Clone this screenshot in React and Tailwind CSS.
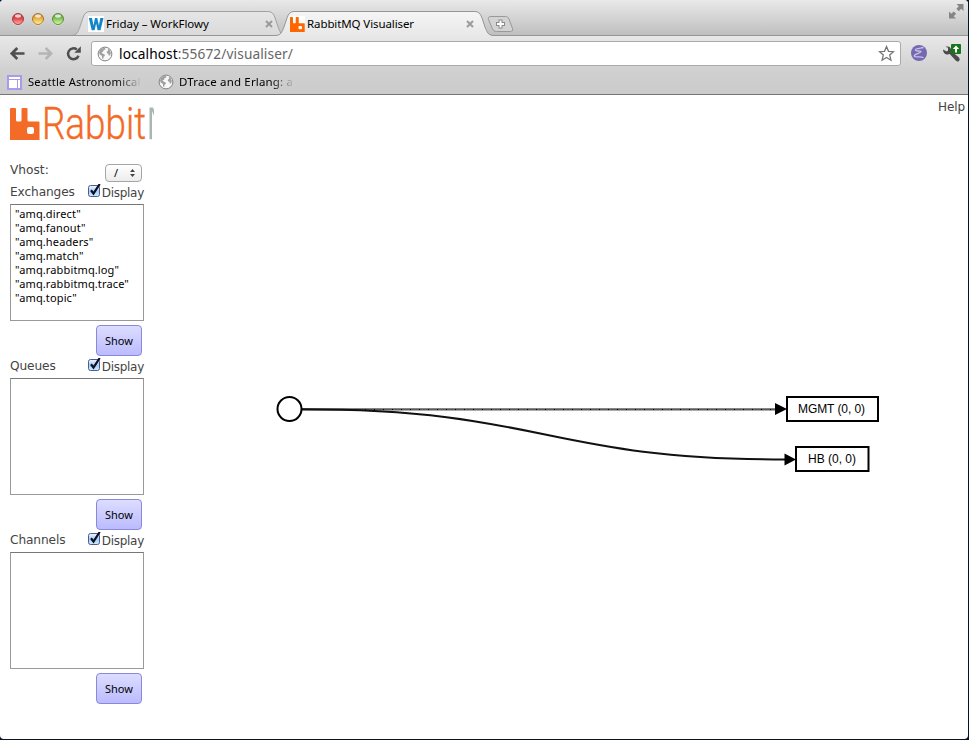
import React from "react";

const EXCHANGES = [
  '"amq.direct"',
  '"amq.fanout"',
  '"amq.headers"',
  '"amq.match"',
  '"amq.rabbitmq.log"',
  '"amq.rabbitmq.trace"',
  '"amq.topic"',
];

function TrafficLight({ id, dark, mid, light }) {
  return (
    <svg className="block h-[14px] w-[14px]" viewBox="0 0 14 14">
      <defs>
        <linearGradient id={id} x1="0" y1="0" x2="0" y2="1">
          <stop offset="0" stopColor={dark} />
          <stop offset="0.45" stopColor={mid} />
          <stop offset="1" stopColor={light} />
        </linearGradient>
      </defs>
      <circle cx="7" cy="7.6" r="6" fill="#fff" opacity="0.6" />
      <circle cx="7" cy="7" r="5.5" fill={`url(#${id})`} stroke={dark} strokeWidth="1" />
      <ellipse cx="7" cy="4" rx="3" ry="1.7" fill="#fff" opacity="0.75" />
    </svg>
  );
}

function Globe() {
  return (
    <svg className="block h-4 w-4 shrink-0" viewBox="0 0 16 16">
      <circle cx="8" cy="8" r="6.9" fill="#f8f8f8" stroke="#808080" strokeWidth="1" />
      <path d="M3 4 5 2.300 8 2l.500 1.500-2 .8-.4 1.500-1.600.8 1.300 1.200 1.700.4.4 1.500-1.400 1.300-.3 2.200-1-.7-.4-2.700L2.600 8.500 2 6.300zM10.800 2.600l2.200 2 .8 2.300-.7 2.500-1.300.2-.5-1.800-1.400-.5-.1-1.500 1.200-1z" fill="#a0a0a0" />
    </svg>
  );
}

function RabbitMark({ className, fill }) {
  return (
    <svg className={className} viewBox="0 0 30 32" preserveAspectRatio="none">
      <path
        fillRule="evenodd"
        fill={fill}
        d="M1 0H5Q6 0 6 1V12Q6 13.500 7.500 13.500H10Q11.500 13.500 11.500 12V1Q11.500 0 12.500 0H16.500Q17.500 0 17.500 1V12Q17.500 13.500 19 13.500H28.500Q29.500 13.500 29.500 14.500V32H0V1Q0 0 1 0ZM19 19Q17 19 17 21V24Q17 26 19 26H22Q24 26 24 24V21Q24 19 22 19Z"
      />
    </svg>
  );
}

function CloseMark() {
  return (
    <svg className="block h-2 w-2 shrink-0" viewBox="0 0 8 8">
      <path d="M1 1l6 6M7 1l-6 6" stroke="#9b9b9b" strokeWidth="2" />
    </svg>
  );
}

function Tab({ active, icon, title }) {
  return (
    <div
      className={
        active
          ? "relative z-10 -ml-[10px] flex h-[25px] w-[217px] items-center pl-[13px] pr-[19px] tracking-[-0.100px]"
          : "relative flex h-[25px] w-[214px] items-center pl-[16px] pr-[13px] tracking-[-0.050px]"
      }
    >
      <svg className="absolute inset-0 h-full w-full" viewBox="0 0 217 25" preserveAspectRatio="none">
        <defs>
          <linearGradient id={active ? "tabOn" : "tabOff"} x1="0" y1="0" x2="0" y2="1">
            <stop offset="0" stopColor={active ? "#f5f5f5" : "#e6e6e6"} />
            <stop offset="1" stopColor={active ? "#e8e8e8" : "#dadada"} />
          </linearGradient>
        </defs>
        <path
          d="M0 24.500C5 24 6 21 8 16L11 7Q13 .5 18 .5H199Q204 .5 206 7L209 16C211 21 212 24 217 24.500V25H0Z"
          fill={active ? "url(#tabOn)" : "url(#tabOff)"}
        />
        <path
          d="M0 24.500C5 24 6 21 8 16L11 7Q13 .5 18 .5H199Q204 .5 206 7L209 16C211 21 212 24 217 24.500"
          fill="none"
          stroke={active ? "#969696" : "#a0a0a0"}
          strokeWidth="1"
        />
        {!active && <path d="M0 24.500H217" stroke="#969696" />}
      </svg>
      <div className="relative flex w-full items-center">
        {icon}
        <span className={active ? "ml-[3px] flex-1 whitespace-nowrap text-[11.5px] leading-4 text-black" : "ml-[2px] flex-1 whitespace-nowrap text-[11.5px] leading-4 text-black"}>{title}</span>
        <CloseMark />
      </div>
    </div>
  );
}

function Checkbox() {
  return (
    <svg className="mt-[2px] block h-[15px] w-[14px]" viewBox="0 0 14 15">
      <defs>
        <linearGradient id="chk" x1="0" y1="0" x2="0" y2="1">
          <stop offset="0" stopColor="#f2f8fe" />
          <stop offset="0.5" stopColor="#a9cdf2" />
          <stop offset="1" stopColor="#c9edff" />
        </linearGradient>
      </defs>
      <rect x="0.500" y="1.500" width="11" height="11" rx="2" fill="url(#chk)" stroke="#4d5a94" />
      <path d="M3 6.300 5.500 9.500 11.700 0" fill="none" stroke="#0b1026" strokeWidth="2.200" />
    </svg>
  );
}

function Section({ title, items }) {
  return (
    <section className="flex w-[134px] flex-col">
      <div className="flex h-[22px] items-start justify-between">
        <span className="pt-px text-[12.200px] leading-[18px] tracking-[-0.120px]">{title}</span>
        <label className="flex items-start">
          <Checkbox />
          <span className="pt-[2px] text-[12px] leading-[18px] tracking-[-0.280px]">Display</span>
        </label>
      </div>
      <ul className="h-[117px] border border-[#999] border-t-[#777] px-1 pt-[2px] font-['Noto_Sans','Open_Sans',sans-serif] text-[11px] leading-[14px] tracking-[0.130px] text-black">
        {items.map((item) => (
          <li key={item} className="whitespace-nowrap">{item}</li>
        ))}
      </ul>
      <button className="mr-[2px] mt-1 h-[31px] w-[46px] self-end rounded-[4px] border border-[#8888dd] bg-linear-to-b from-[#ddddff] to-[#bbbbff] pt-[2px] font-['Noto_Sans','Open_Sans',sans-serif] text-[11px] text-black">
        Show
      </button>
    </section>
  );
}

function Browser() {
  return (
    <header className="font-['Noto_Sans','Open_Sans',sans-serif]">
      <div className="flex h-9 items-end bg-linear-to-b from-[#e9e9e9] to-[#bebebe] shadow-[inset_0_-1px_0_#969696]">
        <div className="flex w-[72px] gap-[6px] pb-[10px] pl-[11px]">
          <TrafficLight id="lr" dark="#a73a3c" mid="#e2474b" light="#ffb0a8" />
          <TrafficLight id="ly" dark="#a8762b" mid="#eeb040" light="#fff3a0" />
          <TrafficLight id="lg" dark="#5b8a3c" mid="#82c058" light="#d8ffa8" />
        </div>
        <Tab
          title="Friday – WorkFlowy"
          icon={
            <svg className="block h-4 w-4 shrink-0" viewBox="0 0 16 16">
              <rect width="16" height="16" fill="#fff" />
              <path d="M.8 2H4l1.500 7.500L7 2h2.300l1.600 7.500L12.300 2h3.200l-3 12.200H9.600L8.100 7.500l-1.500 6.700H3.700z" fill="#1386c8" />
            </svg>
          }
        />
        <Tab
          active
          title="RabbitMQ Visualiser"
          icon={
            <span className="-mr-px ml-px block h-4 w-[15px] shrink-0 bg-white pt-px">
              <RabbitMark className="block h-[15px] w-[15px]" fill="#ff6600" />
            </span>
          }
        />
        <svg className="-ml-[6px] block h-[21px] w-[27px]" viewBox="0 0 27 21">
          <path d="M4 1.500H18.500Q21 1.500 22 4L25.500 13.500Q26.500 16.500 23.500 16.500H9.500Q6.500 16.500 5.500 14L1.500 4.500Q.5 1.500 4 1.500Z" fill="#d3d3d3" stroke="#999" />
          <path d="M13.500 4.500v9M9 9h9" stroke="#8b8b8b" strokeWidth="4" />
          <path d="M13.500 5.500v7M10 9h7" stroke="#fff" strokeWidth="2" />
        </svg>
        <svg className="mb-auto ml-auto mr-1 mt-1 block h-[15px] w-[15px]" viewBox="0 0 15 15">
          <path d="M7.500 0H14.500V7L12.200 4.700 9.800 7.200 7.400 4.800 9.800 2.300ZM0 7.500 2.300 9.800 4.700 7.400 7.100 9.800 4.700 12.200 7 14.500H0Z" fill="#858585" />
        </svg>
      </div>
      <div className="flex h-[59px] flex-col border-b border-[#767676] bg-linear-to-b from-[#e8e8e8] via-[#d0d0d0] via-60% to-[#cbcbcb]">
        <div className="flex h-[35px] items-center">
          <svg className="ml-[9px] block h-4 w-[74px]" viewBox="0 0 74 16">
            <path d="M15.500 7.500H3M8.300 2 2.800 7.500l5.500 5.500" fill="none" stroke="#4f4f4f" strokeWidth="2.700" />
            <path d="M29.500 7.500H42M36.700 2 42.200 7.500l-5.500 5.500" fill="none" stroke="#b5b5b5" strokeWidth="2.500" />
            <path d="M69.500 9.700A5.400 5.400 0 1 1 67.800 3.500" fill="none" stroke="#4f4f4f" strokeWidth="2.500" />
            <path d="M71.800.3V6.700H65.300Z" fill="#4f4f4f" />
          </svg>
          <div className="ml-2 flex h-[25px] w-[810px] items-center rounded-[3px] border border-[#aaa] bg-white pl-[5px] pr-[5px]">
            <Globe />
            <span className="ml-[6px] flex-1 text-[13.700px] leading-5 tracking-[0.110px] text-[#666]">
              <span className="text-black">localhost</span>:55672/visualiser/
            </span>
            <svg className="block h-[17px] w-[17px]" viewBox="0 0 17 17">
              <path d="M8.500 1.600 10.500 6.300 15.500 6.700 11.700 10.100 12.900 15.200 8.500 12.500 4.100 15.200 5.300 10.100 1.500 6.700 6.500 6.300Z" fill="#fff" stroke="#757575" strokeWidth="1.300" />
            </svg>
          </div>
          <svg className="mb-px ml-[10px] block h-4 w-4" viewBox="0 0 16 16">
            <circle cx="8" cy="8" r="8" fill="#7468b1" />
            <path d="M12.500 2.500C8 3.500 3.500 3.800 4.500 5.300 5.500 6.500 10.500 5.500 10 6.800 9.500 8 2.500 9.300 3.300 11.200 4 13 9.500 10.500 12.500 12.800" fill="none" stroke="#c9c3e8" strokeWidth="1.300" />
          </svg>
          <svg className="ml-[15px] block h-[19px] w-[20px]" viewBox="0 0 20 19">
            <path d="M1 5.500 4.700 7.400 6 6.500V3.800L3.500 2.800C7 1.500 9.500 3.500 9.200 7L17 13.500Q18.500 15.500 17 17 15.500 18.300 13.700 16.500L7.700 10C4.500 11.500 1 9.500 1 5.500Z" fill="#4b4b4b" />
            <rect x="9" y="0" width="10" height="10" rx="1" fill="#18751b" />
            <path d="M14 1.500 17.200 5H15V8.500H13V5H10.800Z" fill="#fff" />
          </svg>
        </div>
        <div className="flex h-[22px] items-center pl-[7px] text-[11.500px] text-black">
          <svg className="block h-[15px] w-[15px]" viewBox="0 0 15 15">
            <path d="M1 1H14V14H1Z" fill="#fff" stroke="#a99aea" strokeWidth="2" />
            <path d="M2 4.500H13M10.500 5V13" stroke="#a99aea" />
          </svg>
          <span className="ml-[6px] w-[114px] whitespace-nowrap bg-linear-to-r from-black from-78% to-transparent bg-clip-text text-[11.200px] leading-4 tracking-[0.220px] text-transparent">
            Seattle Astronomical
          </span>
          <span className="ml-4"><Globe /></span>
          <span className="ml-[5px] w-[116px] whitespace-nowrap bg-linear-to-r from-black from-80% to-transparent bg-clip-text leading-4 tracking-[0.170px] text-transparent">
            DTrace and Erlang: a
          </span>
        </div>
      </div>
    </header>
  );
}

function Logo() {
  return (
    <div className="flex h-[35px] w-[144px] items-start">
      <RabbitMark className="mt-px block h-8 w-[30px] shrink-0" fill="#f36b26" />
      <svg className="block h-[35px] w-[114px] shrink-0 overflow-visible" viewBox="40 107 114 35">
        <text x="42" y="139" textLength="104" lengthAdjust="spacingAndGlyphs" fontFamily="Roboto, sans-serif" fontWeight="300" fontSize="43.500" fill="#f36b26" stroke="#f36b26" strokeWidth="0.400">
          Rabbit
        </text>
        <path d="M149.500 107.500H153L154 110V116L152 111V139.300H149.500Z" fill="#a9b7b0" />
      </svg>
    </div>
  );
}

function Graph() {
  return (
    <svg className="block h-[644px] w-[783px]" viewBox="155 95 783 644">
      <g fill="none" stroke="#000" strokeWidth="2">
        <path d="M302 409.300H776" stroke="#5c5c5c" strokeWidth="2.300" />
        <path d="M302 409.500H776" strokeWidth="1" strokeDasharray="1 8" />
        <path d="M302 409.300C545 409.300 545 459.500 786 459.500" stroke="#111" />
        <circle cx="289.500" cy="409" r="12" fill="#fff" />
        <rect x="787" y="397" width="91" height="24" fill="#fff" />
        <rect x="796" y="447" width="72.500" height="24" fill="#fff" />
      </g>
      <path d="M775 403 787 409 775 415ZM784.500 453.500 796 459.500 784.500 465.500Z" />
      <g fontFamily="'Liberation Sans', Arial, sans-serif" fontSize="12" textAnchor="middle">
        <text x="831.500" y="413" textLength="67">MGMT (0, 0)</text>
        <text x="832" y="463" textLength="48">HB (0, 0)</text>
      </g>
    </svg>
  );
}

export default function App() {
  return (
    <div className="h-[740px] w-[969px] overflow-hidden bg-[#0b1226] pb-px pr-px">
      <div className="flex h-[739px] w-[968px] flex-col overflow-hidden rounded-[4px] bg-white">
        <Browser />
        <div className="flex flex-1 font-['DejaVu_Sans',Verdana,sans-serif] text-[#444]">
          <aside className="flex w-[155px] shrink-0 flex-col pl-[10px] pt-3">
            <Logo />
            <div className="mt-[18px] flex h-[22px] w-[132px] items-start justify-between">
              <span className="pt-px text-[12.200px] leading-[18px]">Vhost:</span>
              <div className="mt-1 flex h-[18px] w-[37px] items-center justify-between rounded-[4px] border border-[#a5a5a5] bg-linear-to-b from-white to-[#ececec] pl-2 pr-[6px] font-['Noto_Sans',sans-serif] text-[11px] text-black">
                <span>/</span>
                <svg className="block h-2 w-[5px]" viewBox="0 0 5 8">
                  <path d="M2.500 0 5 3H0ZM2.500 8 0 5H5Z" fill="#444" />
                </svg>
              </div>
            </div>
            <Section title="Exchanges" items={EXCHANGES} />
            <Section title="Queues" items={[]} />
            <Section title="Channels" items={[]} />
          </aside>
          <main className="flex flex-1 overflow-hidden">
            <Graph />
            <a className="pt-[3px] text-[12px] leading-[18px] tracking-[-0.100px]">Help</a>
          </main>
        </div>
      </div>
    </div>
  );
}
